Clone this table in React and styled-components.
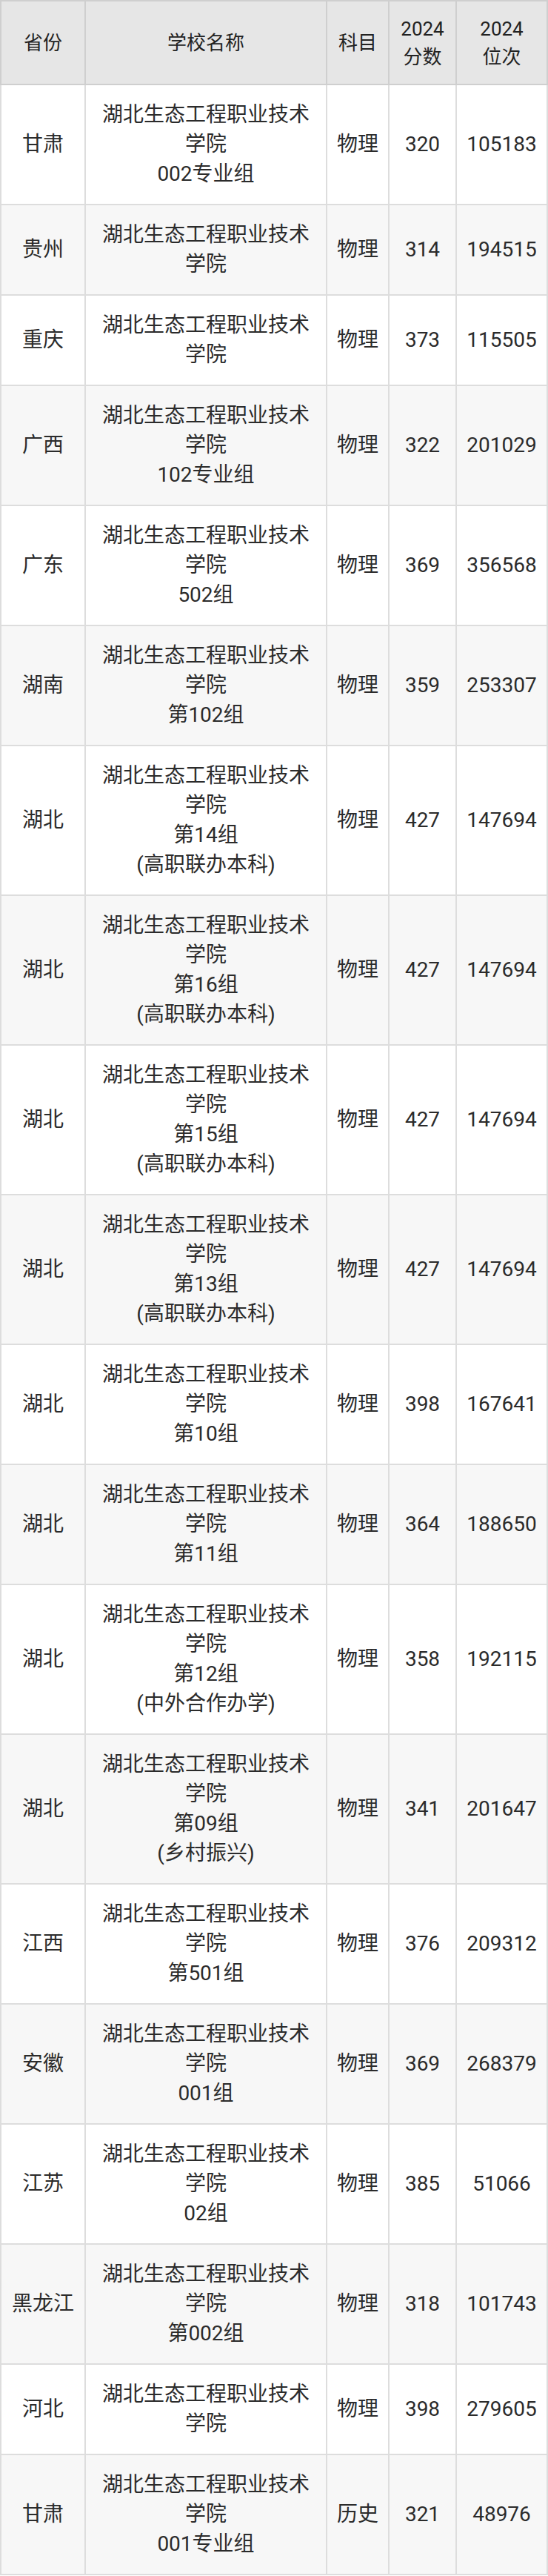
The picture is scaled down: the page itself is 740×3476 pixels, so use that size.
import React from "react";
import styled, { createGlobalStyle } from "styled-components";

const GlobalStyle = createGlobalStyle`
  html, body {
    margin: 0;
    padding: 0;
    background: #ffffff;
  }
  body {
    font-family: Roboto, "Noto Sans CJK SC", "Noto Sans", sans-serif;
    color: #333333;
  }
`;

const COLUMNS = "112px 324px 82px 89px 121px";

const Table = styled.div`
  width: 740px;
  display: flex;
  flex-direction: column;
`;

const HeadRow = styled.div`
  display: grid;
  grid-template-columns: ${COLUMNS};
  gap: 2px;
  padding: 2px;
  background: #cfcfcf;
`;

const HeadCell = styled.div`
  background: #e6e6e6;
  min-height: 111px;
  display: flex;
  align-items: center;
  justify-content: center;
  text-align: center;
  font-size: 26px;
  line-height: 38px;
  color: #222222;
`;

const Body = styled.div`
  display: flex;
  flex-direction: column;
  gap: 2px;
  padding: 0 2px 2px;
  background: #dddddd;
`;

const Row = styled.div`
  display: grid;
  grid-template-columns: ${COLUMNS};
  gap: 2px;
`;

const Cell = styled.div`
  background: ${(p) => (p.$striped ? "#f7f7f7" : "#ffffff")};
  padding: 20px 6px;
  display: flex;
  align-items: center;
  justify-content: center;
  text-align: center;
  font-size: 28px;
  line-height: 40px;
  color: #2b2b2b;
`;

const Lines = styled.div`
  display: flex;
  flex-direction: column;
  align-items: center;
`;

const Line = styled.span`
  display: block;
  white-space: nowrap;
`;

const rows = [
  ["甘肃", ["002专业组"], "物理", "320", "105183"],
  ["贵州", [], "物理", "314", "194515"],
  ["重庆", [], "物理", "373", "115505"],
  ["广西", ["102专业组"], "物理", "322", "201029"],
  ["广东", ["502组"], "物理", "369", "356568"],
  ["湖南", ["第102组"], "物理", "359", "253307"],
  ["湖北", ["第14组", "(高职联办本科)"], "物理", "427", "147694"],
  ["湖北", ["第16组", "(高职联办本科)"], "物理", "427", "147694"],
  ["湖北", ["第15组", "(高职联办本科)"], "物理", "427", "147694"],
  ["湖北", ["第13组", "(高职联办本科)"], "物理", "427", "147694"],
  ["湖北", ["第10组"], "物理", "398", "167641"],
  ["湖北", ["第11组"], "物理", "364", "188650"],
  ["湖北", ["第12组", "(中外合作办学)"], "物理", "358", "192115"],
  ["湖北", ["第09组", "(乡村振兴)"], "物理", "341", "201647"],
  ["江西", ["第501组"], "物理", "376", "209312"],
  ["安徽", ["001组"], "物理", "369", "268379"],
  ["江苏", ["02组"], "物理", "385", "51066"],
  ["黑龙江", ["第002组"], "物理", "318", "101743"],
  ["河北", [], "物理", "398", "279605"],
  ["甘肃", ["001专业组"], "历史", "321", "48976"],
];

const SCHOOL = ["湖北生态工程职业技术", "学院"];

export default function App() {
  return (
    <>
      <GlobalStyle />
      <Table>
        <HeadRow>
          <HeadCell>省份</HeadCell>
          <HeadCell>学校名称</HeadCell>
          <HeadCell>科目</HeadCell>
          <HeadCell>
            <Lines>
              <Line>2024</Line>
              <Line>分数</Line>
            </Lines>
          </HeadCell>
          <HeadCell>
            <Lines>
              <Line>2024</Line>
              <Line>位次</Line>
            </Lines>
          </HeadCell>
        </HeadRow>
        <Body>
          {rows.map(([prov, extra, subject, score, rank], i) => {
            const striped = i % 2 === 1;
            return (
              <Row key={i}>
                <Cell $striped={striped}>{prov}</Cell>
                <Cell $striped={striped}>
                  <Lines>
                    {[...SCHOOL, ...extra].map((t, j) => (
                      <Line key={j}>{t}</Line>
                    ))}
                  </Lines>
                </Cell>
                <Cell $striped={striped}>{subject}</Cell>
                <Cell $striped={striped}>{score}</Cell>
                <Cell $striped={striped}>{rank}</Cell>
              </Row>
            );
          })}
        </Body>
      </Table>
    </>
  );
}
